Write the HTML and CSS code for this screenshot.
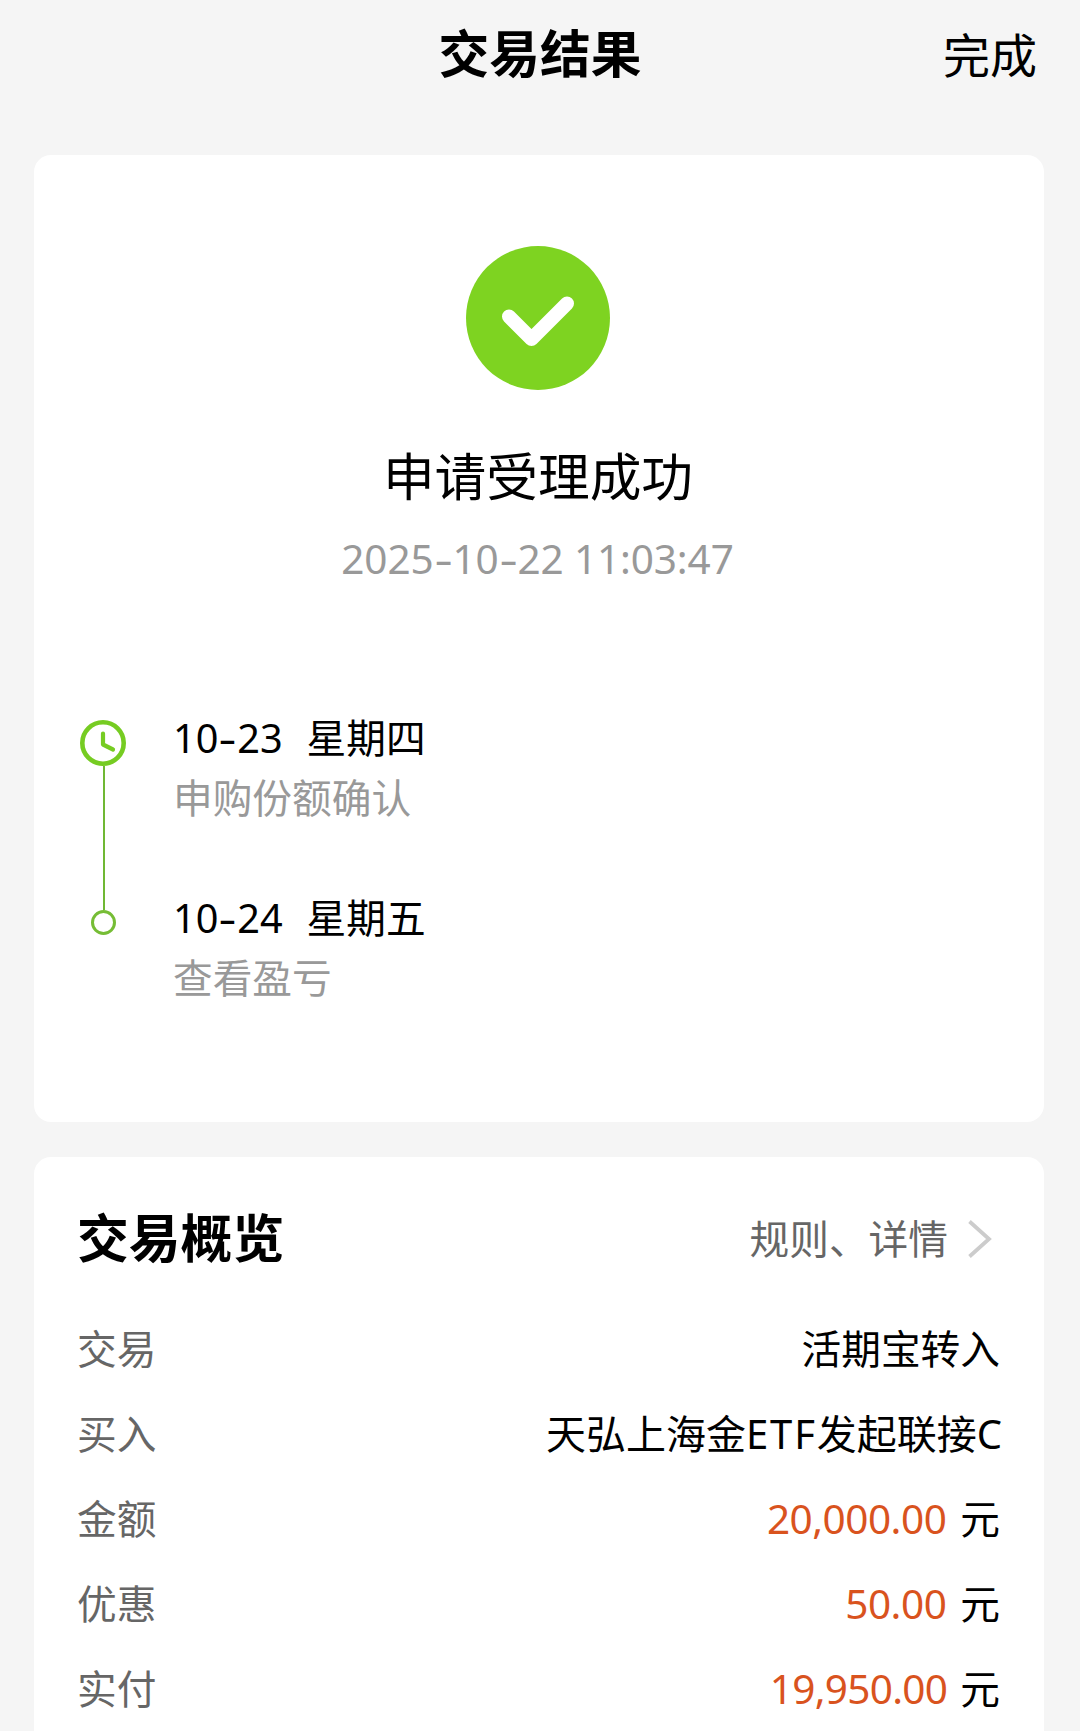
FILE: index.html
```html
<!DOCTYPE html>
<html lang="zh-CN">
<head>
<meta charset="utf-8">
<title>交易结果</title>
<link rel="stylesheet" href="styles.css">
</head>
<body>
<header class="topbar">
  <h1 class="topbar-title">交易结果</h1>
  <a class="topbar-done">完成</a>
</header>
<main class="cards">
  <section class="card result">
    <svg class="result-icon" viewBox="0 0 144 144">
      <circle cx="72" cy="72" r="72" fill="#7ed321"/>
      <path d="M43 70.500 65.500 93 101 57.500" fill="none" stroke="#fff" stroke-width="14" stroke-linecap="round" stroke-linejoin="round"/>
    </svg>
    <h2 class="result-title">申请受理成功</h2>
    <time class="result-time">2025<i class="dash">-</i>10<i class="dash">-</i>22 11:03:47</time>
    <ol class="timeline">
      <li class="step">
        <div class="step-rail">
          <svg class="clock" viewBox="0 0 46 46" fill="none" stroke="#76cc22">
            <circle cx="23" cy="23" r="20.700" stroke-width="4.600"/>
            <path d="M23 13.500v11l10 5" stroke-width="4.200" stroke-linecap="round" stroke-linejoin="round"/>
          </svg>
          <span class="rail-line"></span>
        </div>
        <div class="step-text">
          <div class="step-date"><span>10<i class="dash">-</i>23</span><span>星期四</span></div>
          <div class="step-note">申购份额确认</div>
        </div>
      </li>
      <li class="step">
        <div class="step-rail"><span class="dot"></span></div>
        <div class="step-text">
          <div class="step-date"><span>10<i class="dash">-</i>24</span><span>星期五</span></div>
          <div class="step-note">查看盈亏</div>
        </div>
      </li>
    </ol>
  </section>
  <section class="card overview">
    <div class="overview-head">
      <h2 class="overview-title">交易概览</h2>
      <a class="overview-link">规则、详情
        <svg class="chevron" viewBox="0 0 24 38" fill="none" stroke="#ccc" stroke-width="3.800"><path d="M1.500 1.500 21 19 1.500 36.500"/></svg>
      </a>
    </div>
    <dl class="rows">
      <div class="row"><dt>交易</dt><dd>活期宝转入</dd></div>
      <div class="row"><dt>买入</dt><dd class="fund">天弘上海金<span class="latin">ETF</span>发起联接C</dd></div>
      <div class="row"><dt>金额</dt><dd><span class="amount">20,000.00</span>元</dd></div>
      <div class="row"><dt>优惠</dt><dd><span class="amount">50.00</span>元</dd></div>
      <div class="row"><dt>实付</dt><dd><span class="amount amount-paid">19,950.00</span>元</dd></div>
    </dl>
  </section>
</main>
</body>
</html>
```
FILE: styles.css
```css
* { box-sizing: border-box; margin: 0; padding: 0; }

body {
  width: 1080px;
  height: 1731px;
  overflow: hidden;
  background: #f5f5f5;
  color: #000;
  font-family: "Noto Sans", "Noto Sans CJK SC", sans-serif;
  font-size: 39.700px;
  white-space: nowrap;
}

.topbar {
  display: grid;
  grid-template-columns: 1fr auto 1fr;
  align-items: center;
  height: 155px;
  padding: 0 43px 47px 43px;
}
.topbar-title { grid-column: 2; font-size: 50.700px; line-height: 60px; font-weight: 700; }
.topbar-done { justify-self: end; font-size: 47px; line-height: 60px; padding-top: 1px; }

.cards { display: flex; flex-direction: column; gap: 35px; padding: 0 36px 0 34px; }
.card { background: #fff; border-radius: 17px; }

.result {
  display: flex;
  flex-direction: column;
  align-items: center;
  height: 967px;
  padding-top: 91px;
}
.result-icon { width: 144px; height: 144px; margin-right: 2px; }
.result-title { margin: 56px 2px 0 0; height: 60px; font-size: 51.700px; line-height: 60px; font-weight: 400; }
.result-time { margin: 28px 3px 0 0; height: 50px; color: #999; font-size: 40.500px; line-height: 50px; letter-spacing: -0.120px; }
.dash { display: inline-block; font-style: normal; transform: scaleX(1.400); margin: 0 3px; }

.timeline { align-self: stretch; list-style: none; margin-top: 131px; padding-left: 46px; }
.step { display: flex; gap: 47px; height: 180px; }
.step-rail { display: flex; flex-direction: column; align-items: center; width: 46px; }
.clock { flex: none; width: 46px; height: 46px; margin-top: 5px; }
.rail-line { width: 2px; flex: 1; margin-bottom: -15px; margin-left: 1px; background: #70b834; }
.dot { width: 25px; height: 25px; margin: 15px 0 0 1px; border: 3px solid #76bd35; border-radius: 50%; }
.step-date { display: flex; gap: 24px; height: 48px; line-height: 47px; }
.step-note { height: 48px; margin-top: 12px; line-height: 47px; color: #999; }

.overview { height: 600px; padding: 50px 44px 0 43px; }
.overview-head { display: flex; justify-content: space-between; align-items: center; height: 62px; }
.overview-title { font-size: 51.800px; line-height: 62px; font-weight: 700; }
.overview-link { display: flex; align-items: center; gap: 20px; height: 48px; padding: 1px 8px 0 0; line-height: 48px; color: #666; }
.chevron { width: 24px; height: 38px; }
.rows { margin-top: 37px; }
.row { display: flex; justify-content: space-between; align-items: center; height: 85px; line-height: 50px; }
dt { color: #666; }
.fund { margin-right: -2px; font-size: 40px; }
.latin { letter-spacing: 1.800px; }
.amount { margin-right: 14px; color: #d9531e; font-size: 40.500px; letter-spacing: -0.500px; }
.amount-paid { margin-right: 13px; letter-spacing: -0.700px; }
```
